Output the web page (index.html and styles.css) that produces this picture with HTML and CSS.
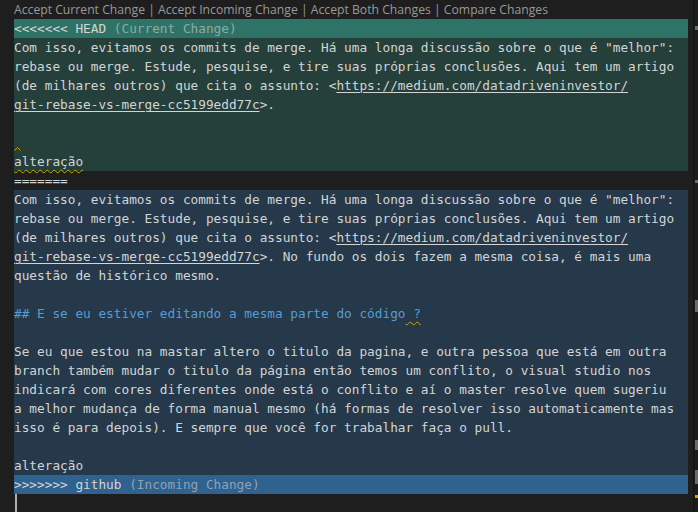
FILE: index.html
```html
<!DOCTYPE html>
<html lang="pt">
<head>
<meta charset="utf-8">
<title>Merge conflict</title>
<link rel="stylesheet" href="styles.css">
</head>
<body>
<div class="window">
  <div class="editor">
    <div class="codelens">Accept Current Change | Accept Incoming Change | Accept Both Changes | Compare Changes</div>
    <div class="line head-current"><span class="marker">&lt;&lt;&lt;&lt;&lt;&lt;&lt; HEAD</span> <span class="hint">(Current Change)</span></div>
    <div class="block current">
      <div class="line">Com isso, evitamos os commits de merge. Há uma longa discussão sobre o que é "melhor":</div>
      <div class="line">rebase ou merge. Estude, pesquise, e tire suas próprias conclusões. Aqui tem um artigo</div>
      <div class="line">(de milhares outros) que cita o assunto: &lt;<span class="link">https://medium.com/datadriveninvestor/</span></div>
      <div class="line"><span class="link">git-rebase-vs-merge-cc5199edd77c</span>&gt;.</div>
      <div class="line"></div>
      <div class="line caret-line"><svg class="caret-squiggle" width="7" height="4" viewBox="0 0 7 4"><path d="M0.5 3.5 L3.5 0.5 L6.5 3.5" fill="none" stroke="#cca700" stroke-width="1"/></svg></div>
      <div class="line"><span class="squiggle">alteração</span></div>
    </div>
    <div class="line">=======</div>
    <div class="block incoming">
      <div class="line">Com isso, evitamos os commits de merge. Há uma longa discussão sobre o que é "melhor":</div>
      <div class="line">rebase ou merge. Estude, pesquise, e tire suas próprias conclusões. Aqui tem um artigo</div>
      <div class="line">(de milhares outros) que cita o assunto: &lt;<span class="link">https://medium.com/datadriveninvestor/</span></div>
      <div class="line"><span class="link">git-rebase-vs-merge-cc5199edd77c</span>&gt;. No fundo os dois fazem a mesma coisa, é mais uma</div>
      <div class="line">questão de histórico mesmo.</div>
      <div class="line"></div>
      <div class="line heading">## E se eu estiver editando a mesma parte do código<span class="squiggle"> ?</span></div>
      <div class="line"></div>
      <div class="line">Se eu que estou na mastar altero o titulo da pagina, e outra pessoa que está em outra</div>
      <div class="line">branch também mudar o titulo da página então temos um conflito, o visual studio nos</div>
      <div class="line">indicará com cores diferentes onde está o conflito e aí o master resolve quem sugeriu</div>
      <div class="line">a melhor mudança de forma manual mesmo (há formas de resolver isso automaticamente mas</div>
      <div class="line">isso é para depois). E sempre que você for trabalhar faça o pull.</div>
      <div class="line"></div>
      <div class="line">alteração</div>
    </div>
    <div class="line head-incoming"><span class="marker">&gt;&gt;&gt;&gt;&gt;&gt;&gt; github</span> <span class="hint">(Incoming Change)</span></div>
    <div class="line cursor-line"><span class="cursor"></span></div>
  </div>
  <div class="gutter-right"></div>
  <div class="ruler">
    <span class="mark m1"></span>
    <span class="mark m2"></span>
    <span class="mark m3"></span>
    <span class="mark m4"></span>
    <span class="mark m5"></span>
    <span class="mark warn"></span>
  </div>
</div>
</body>
</html>
```
FILE: styles.css
```css
html, body {
  margin: 0;
  padding: 0;
  background: #1e1e1e;
  height: 512px;
  overflow: hidden;
}

.window {
  display: flex;
  height: 512px;
  overflow: hidden;
}

.editor {
  width: 674px;
  padding-left: 14px;
  display: flex;
  flex-direction: column;
  flex-shrink: 0;
  font-family: "DejaVu Sans Mono", "Liberation Mono", monospace;
  font-size: 12.75px;
  color: #d4d4d4;
}

.editor > * {
  flex-shrink: 0;
}

.codelens {
  height: 19px;
  line-height: 19px;
  font-family: "Open Sans", "Noto Sans", sans-serif;
  font-size: 12.2px;
  color: #999999;
  white-space: nowrap;
}

.line {
  height: 19px;
  line-height: 19px;
  white-space: pre;
}

.head-current {
  background: #2f7366;
}

.head-incoming {
  background: #2f628f;
}

.current {
  background: #25403b;
}

.incoming {
  background: #25394b;
}

.hint {
  color: #8fa9a5;
}

.head-incoming .hint {
  color: #8ea3b6;
}

.link {
  text-decoration: underline;
  text-underline-offset: 2px;
  text-decoration-thickness: 1px;
}

.squiggle {
  text-decoration-line: underline;
  text-decoration-style: wavy;
  text-decoration-color: #cca700;
  text-decoration-thickness: 1px;
  text-underline-offset: 3px;
}

.heading {
  color: #569cd6;
}

.caret-line {
  display: flex;
  align-items: flex-end;
  padding-bottom: 1px;
  box-sizing: border-box;
}

.caret-squiggle {
  display: block;
}

.cursor-line {
  background: #1e1e1e;
}

.cursor {
  display: block;
  width: 2px;
  height: 18px;
  margin-left: 1px;
  background: #aeafad;
}

.gutter-right {
  width: 5px;
  flex-shrink: 0;
  background: #1e1e1e;
}

.ruler {
  width: 4px;
  flex-shrink: 0;
  position: relative;
  background: #1b1b1b;
  border-left: 1px solid #141414;
}

.mark {
  position: absolute;
  left: 1px;
  width: 3px;
  background: #6b6b6b;
}

.m1 { top: 26px; height: 4px; }
.m2 { top: 180px; height: 3px; }
.m3 { top: 300px; height: 12px; }
.m4 { top: 440px; height: 10px; }
.m5 { top: 470px; height: 14px; }

.warn {
  top: 495px;
  height: 3px;
  background: #cca700;
}
```
